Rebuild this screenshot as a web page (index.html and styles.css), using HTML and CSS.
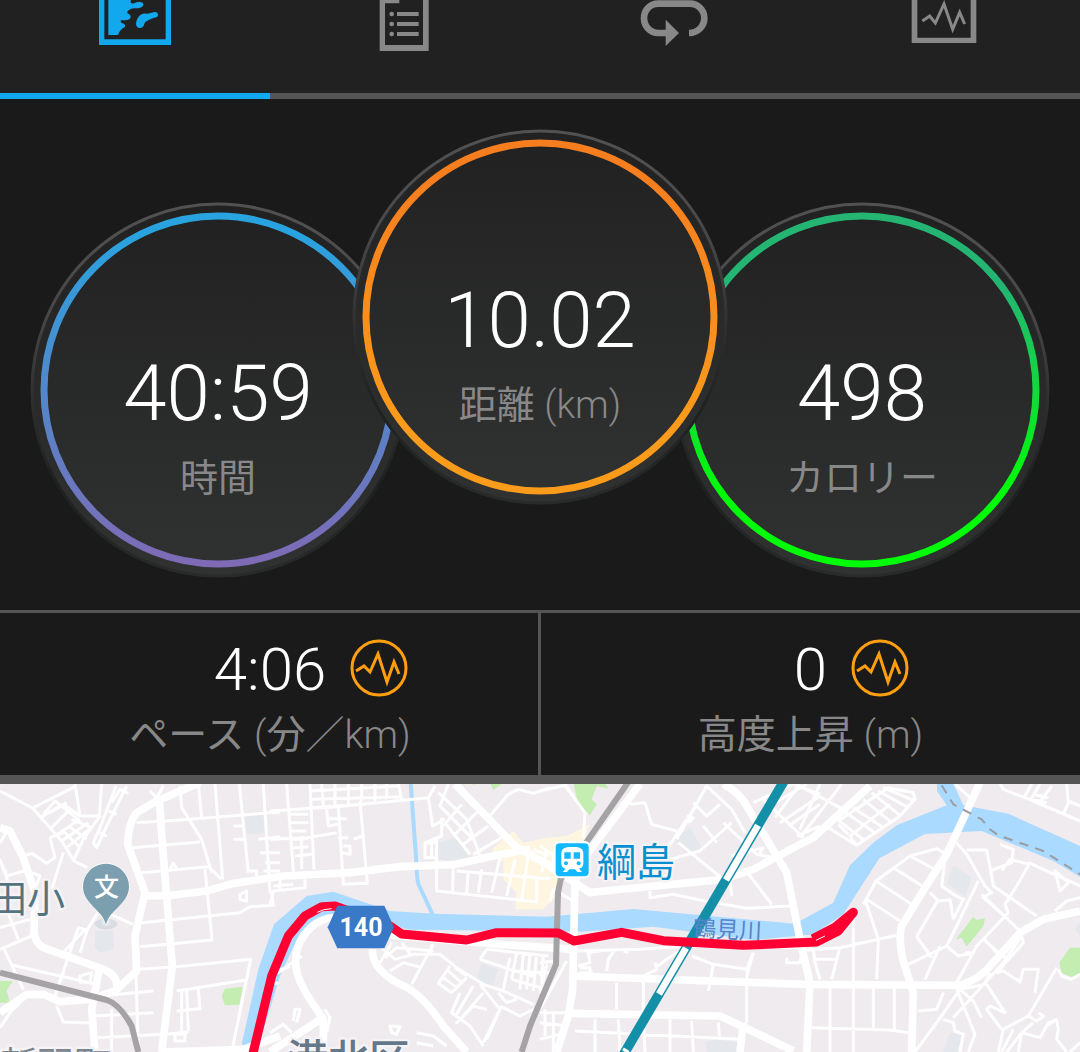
FILE: index.html
```html
<!DOCTYPE html>
<html lang="ja">
<head>
<meta charset="utf-8">
<meta name="viewport" content="width=device-width, initial-scale=1">
<title>アクティビティ</title>
<link rel="stylesheet" href="styles.css">
</head>
<body>
<nav class="tabs" aria-label="アクティビティ">
  <button class="tab tab-active" type="button" aria-label="マップ">
    <svg class="tab-icon" width="72" height="52" viewBox="0 0 216 156">
      <path d="M0 0H216V135H0ZM16 0V118H200V0Z" fill="currentColor" fill-rule="evenodd"/>
      <path d="M28 0H96Q91 13 105 10Q113 5 124 6Q136 8 132 17Q128 24 112 25Q97 23 87 32Q81 39 91 43Q99 50 91 58Q83 62 68 60Q61 65 70 70Q81 73 78 81Q62 88 57 105H28Z" fill="currentColor"/>
      <path d="M111 72Q112 54 125 44Q132 40 146 41L163 37Q176 34 177 45Q176 53 165 53Q150 58 138 67L134 77Q130 85 121 84Q112 82 111 72Z" fill="currentColor"/>
    </svg>
  </button>
  <button class="tab" type="button" aria-label="詳細">
    <svg class="tab-icon" width="52" height="52" viewBox="0 0 156 156">
      <path d="M2 0H149V153H2ZM18 10V135H132V0H61V10Z" fill="currentColor" fill-rule="evenodd"/>
      <g fill="currentColor"><circle cx="38" cy="42" r="7"/><circle cx="38" cy="72" r="7"/><circle cx="38" cy="102" r="7"/><path d="M54 36H119V48H54ZM54 66H119V78H54ZM54 96H119V108H54Z"/></g>
    </svg>
  </button>
  <button class="tab" type="button" aria-label="ラップ">
    <svg class="tab-icon" width="70" height="52" viewBox="0 0 210 156">
      <path d="M78 99H55C30 99 12 78 12 54S30 11 55 11H149C174 11 193 30 193 54S174 99 147 99" fill="none" stroke="currentColor" stroke-width="20"/>
      <path d="M77 59L117 99L77 138Z" fill="currentColor"/>
    </svg>
  </button>
  <button class="tab" type="button" aria-label="チャート">
    <svg class="tab-icon" width="68" height="52" viewBox="0 0 204 156">
      <path d="M2 0H196V129H2ZM19 0V113H179V0Z" fill="currentColor" fill-rule="evenodd"/>
      <path d="M34 63L56 48L73 69L99 12L125 88L146 37L161 72" fill="none" stroke="currentColor" stroke-width="9"/>
    </svg>
  </button>
</nav>

<main>
  <svg class="defs" width="0" height="0" aria-hidden="true">
    <defs>
      <linearGradient id="face" x2="0" y2="1"><stop stop-color="#212121"/><stop offset="1" stop-color="#303231"/></linearGradient>
      <linearGradient id="rim" gradientUnits="userSpaceOnUse" x1="0" y1="0" x2="0" y2="376"><stop stop-color="#525252"/><stop offset=".3" stop-color="#474747"/><stop offset=".55" stop-color="#2d2d2d"/><stop offset=".75" stop-color="#1f2020"/><stop offset="1" stop-color="#292b2a"/></linearGradient>
      <linearGradient id="blue" x2="0" y2="1"><stop offset=".05" stop-color="#29a3df"/><stop offset="1" stop-color="#7f6ab5"/></linearGradient>
      <linearGradient id="orange" x2="0" y2="1"><stop offset=".1" stop-color="#f67e1f"/><stop offset=".8" stop-color="#fa9b1b"/></linearGradient>
      <linearGradient id="green" x2="0" y2="1"><stop offset=".2" stop-color="#24b573"/><stop offset=".8" stop-color="#00fc06"/></linearGradient>
    </defs>
  </svg>
  <section class="dials">
    <div class="dial">
      <svg class="dial-face" viewBox="0 0 376 376"><circle cx="188" cy="188" r="187" fill="url(#face)"/><circle cx="188" cy="188" r="186" fill="none" stroke="url(#rim)" stroke-width="3"/><circle cx="188" cy="188" r="174" fill="none" stroke="url(#blue)" stroke-width="7"/></svg>
      <div class="dial-text"><div class="dial-value">40:59</div><div class="label">時間</div></div>
    </div>
    <div class="dial dial-main">
      <svg class="dial-face" viewBox="0 0 376 376"><circle cx="188" cy="188" r="187" fill="url(#face)"/><circle cx="188" cy="188" r="186" fill="none" stroke="url(#rim)" stroke-width="3"/><circle cx="188" cy="188" r="174" fill="none" stroke="url(#orange)" stroke-width="7"/></svg>
      <div class="dial-text"><div class="dial-value">10.02</div><div class="label">距離 <span class="unit">(km)</span></div></div>
    </div>
    <div class="dial">
      <svg class="dial-face" viewBox="0 0 376 376"><circle cx="188" cy="188" r="187" fill="url(#face)"/><circle cx="188" cy="188" r="186" fill="none" stroke="url(#rim)" stroke-width="3"/><circle cx="188" cy="188" r="174" fill="none" stroke="url(#green)" stroke-width="7"/></svg>
      <div class="dial-text"><div class="dial-value">498</div><div class="label">カロリー</div></div>
    </div>
  </section>

  <section class="stats">
    <div class="stat">
      <div class="stat-row"><span class="stat-value">4:06</span>
        <button class="chart-button" type="button" aria-label="ペースのチャート"><svg width="58" height="58" viewBox="0 0 58 58" fill="none" stroke="#ff9e0f"><circle cx="29" cy="29" r="27" stroke-width="3"/><path d="M6 32L14 27L20 33L28 15L37 43L44 23L49 35" stroke-width="3"/></svg></button>
      </div>
      <div class="label">ペース <span class="unit">(</span>分<span class="unit">／km)</span></div>
    </div>
    <div class="stat">
      <div class="stat-row"><span class="stat-value">0</span>
        <button class="chart-button" type="button" aria-label="高度のチャート"><svg width="58" height="58" viewBox="0 0 58 58" fill="none" stroke="#ff9e0f"><circle cx="29" cy="29" r="27" stroke-width="3"/><path d="M6 32L14 27L20 33L28 15L37 43L44 23L49 35" stroke-width="3"/></svg></button>
      </div>
      <div class="label">高度上昇 <span class="unit">(m)</span></div>
    </div>
  </section>

  <section class="map" aria-label="マップ">
    <svg class="map-canvas" viewBox="0 0 1080 268">
      <g transform="translate(0 -8) scale(.333333)">
        <!-- land use -->
        <g fill="#e4e8ed">
          <path d="M732 122L790 116L795 172L730 174ZM285 465L340 462L340 520L300 530L285 515Z"/>
          <path d="M1312 200L1370 185L1415 240L1345 265L1315 245ZM1430 615L1445 562L1495 580L1475 635Z"/>
          <path d="M2022 190L2070 155L2105 215L2060 232ZM2118 798L2150 790L2215 800L2215 828L2120 828ZM2840 320L2860 268L2915 305L2895 362ZM2830 828L2850 770L2890 775L2870 828ZM3225 460L3240 440V480Z"/>
        </g>
        <path d="M1475 220L1540 165L1570 200L1640 185L1700 180L1770 145L1750 200L1700 220L1680 350L1630 400L1545 400L1550 350L1510 310L1510 260Z" fill="#fff6e2"/>
        <g fill="#c3edb1">
          <path d="M0 615L38 615L20 645L30 680L0 680ZM665 660L675 638L728 632L718 686L675 688ZM1420 20H1435L1420 28ZM1470 20H1510L1480 42ZM1720 20H1815L1825 38L1790 30L1775 70L1790 85L1770 118L1735 85ZM2868 490L2920 422L2930 432L2955 426L2950 450L2900 512L2885 485ZM3178 560L3210 515L3240 515V595L3215 603L3185 590Z"/>
        </g>
        <!-- water -->
        <g fill="#aadaff">
          <path d="M725 805L775 580L822 445L920 360L1000 347L1170 405L1300 413L1640 422L1900 399L2400 445L2400 435L2500 380L2550 268L2620 200L2690 148L2840 88L2811 45V24H2860L2890 88L3025 113L3240 210V302L3160 255L2945 165L2775 174L2638 247L2530 415L2440 475L2260 492L1960 452L1740 467L1230 461L1150 440L1080 390L900 470L840 600L770 828Z"/>
        </g>
        <path d="M1232 20L1250 270Q1250 320 1260 335L1300 420" class="stream"/>
        <!-- side streets, west -->
        <g class="street">
          <path d="M0 45L98 96L225 32M98 96L185 195L222 255L262 275M225 24L240 120M120 125L190 85L240 120H300L275 155L250 190L222 250M150 110L200 80M305 24L298 120M130 115L165 75L235 130M155 155L210 100M165 180L240 130M185 195L265 140M200 215L280 150M205 150L260 190M190 165L240 215M215 130L275 155M348 30L300 155L280 200L290 215L320 150L380 30M335 80L360 40L385 52M325 105L350 115M300 170L320 180M150 185L165 245L140 262L95 232L70 240M150 185L190 170M190 230L155 340M0 200L18 170M0 250L18 300L90 280M15 280L25 330L20 400L55 490M0 455L90 430M0 520L95 480M10 515L70 640M38 568L290 625M180 540L255 460L235 455L165 660M240 530L262 460L300 400L398 445M95 290L120 300L110 325L90 310M240 600L275 590L270 620L240 618ZM170 690L190 738L290 742M0 755L30 710L75 665M300 660L460 645M285 720L460 710M290 785L490 775M335 700V828M408 590L415 828"/>
          <path d="M410 140L540 132L840 108M395 215L600 198M425 290L625 272L665 310M425 440L720 410L750 392L820 388L815 350M420 512L636 492L615 280M418 580L530 572L752 550L695 828M530 645L738 612M540 30L545 95L605 190L635 290M595 24L605 125M645 24L668 310M718 24L745 290M790 24L810 350M700 150H730M700 190H730M775 190L840 182M780 230H840M795 260H840M790 285H840M745 285H770V300M720 355L740 345V375L720 370ZM510 280L520 262L530 278M450 45L470 65L490 30M530 705L600 698L595 640M545 640V770M560 640L565 765M525 775H555V795H525ZM500 775L565 768"/>
        </g>
        <!-- side streets, harbour ward -->
        <g class="street" transform="translate(810)">
          <path d="M0 105L200 92L475 65L495 30M475 65L488 150L525 130M0 190L110 185L200 170M50 24L72 310M120 24L132 280M120 45L390 30M125 70L395 62M122 95L270 85M155 24L160 90M195 24V90M235 24V85M275 24V75M315 24V75M350 24V70M385 24L395 70M60 115H115M62 140H115M65 165H110M68 190L115 188M70 215L115 212M75 240L125 235M95 180V280M205 90L220 325L292 322L270 75M170 100L175 150L205 145M175 128H230M205 185H235M220 210H240V235L215 230M250 190L275 180M0 385L10 345L105 335V310M10 330L70 325M30 310V340"/>
          <path d="M535 24L510 90L610 190M505 50L590 130L630 240M525 140L600 235M520 150L575 85M550 180L620 110M580 205L655 150M610 235L695 185M515 125V180L465 200V250M500 190V345L800 378L800 300M485 205V250M550 260L548 345M595 285L590 350M635 280L625 350M690 245L665 350M735 250L710 360M775 240L755 370M560 285L840 308M655 125L715 55L745 40L790 52L840 35M465 200H500V245H465M790 220L835 240"/>
          <path d="M330 510L375 550L430 535L510 535L560 575L640 625L700 645L790 685M345 545L380 515L490 525M360 585L400 560L455 575M330 560L365 500M395 500L425 540M490 505L425 625M540 570L505 622L545 650L590 605M520 605L560 635M535 585L575 620M555 575L590 600M570 650L545 710L600 750L640 810M610 630L560 715M630 625L690 700L650 790M640 650L580 720L560 740L610 690L650 700M685 650L710 680L740 670M630 550L650 520L835 540M630 550L720 580L790 600M720 545L700 640M740 530L725 610M760 535L750 640M780 535L770 640M800 535L790 645M820 535L815 620M725 585L840 590M725 610L830 640M640 800L690 700M690 690L750 720L790 700M440 770L490 780L530 810M440 800L490 810M360 750L390 752L380 775L365 770ZM0 770L40 745L65 770M70 735L75 700L90 700L80 740M165 700L180 725L170 770M0 620L25 622M0 590L60 572M10 600L95 540"/>
        </g>
        <!-- side streets, around the station -->
        <g class="street" transform="translate(1620)">
          <path d="M0 45L75 28L135 110L130 185M75 24L100 60M270 85L315 80L335 145L410 165M410 190L500 30L575 100L615 170M360 250L440 130M460 80L500 120L540 85M440 120L460 125L445 140M390 250L480 225L575 140M415 200L550 310M490 150L530 200M550 140L650 235L700 245M575 240L670 215L655 240M615 280L695 385M575 360L570 310M330 345L330 365L400 355L480 372L620 397L750 390M640 80L760 24M670 70L790 185M680 95L800 24M705 125L780 24M720 140L840 60M745 150L840 85M760 24L840 55M770 180L840 150M0 210L60 250M30 375L40 340L100 375M0 245L50 270M20 225L5 290M40 240V285"/>
          <path d="M100 525L300 520L450 510L790 515M115 570L150 560L145 530L180 525M120 590L155 590V610M200 585L205 550L225 520M265 530L250 525M310 610V710M230 620V700M345 575L395 540L440 515M310 600L350 580L345 560M455 540L520 565L505 645M520 565L620 580L640 530M740 545V560H780L785 530M640 530L620 600V740M165 730V828M235 730L240 828M310 725L315 828M390 730V828M455 735L460 828M535 740L538 780M105 765L600 790M0 710H90M0 740L85 750M0 790L60 775M40 710V828M15 700V780M80 555L0 700M0 560L45 555M0 600L20 570L0 650M150 595V575H120"/>
        </g>
        <!-- side streets, east -->
        <g class="street" transform="translate(2400)">
          <path d="M0 30L130 100M60 24L0 160M125 24L0 185M85 155L170 208L300 120L345 70L340 50L265 35L115 135M170 208L150 180L270 85M105 125L195 195M130 105L225 170M160 95L250 155M190 70L275 140M215 50L300 118M235 45L325 95M250 35L345 75M145 175L115 145M190 385L228 315L330 240L410 218L435 232M330 240L405 280M285 278L375 335M228 315L335 385M200 370L300 435M195 370L235 490L230 610M160 410V828M20 522L120 515L290 478M40 522L45 560L60 610M45 550H115M118 520L95 610M90 635V828M220 635V755M283 635V760M35 755L270 762L325 770"/>
          <path d="M470 200L500 235L555 330L575 350L555 360M500 222H560L575 300L580 330L710 420M600 205L640 220L635 260L570 285M605 285L630 250L690 265M435 250L425 330L460 355L490 370L460 430M535 315L465 460L440 510L325 565M415 370L350 482L395 545M390 350L415 375L450 372L460 430M420 510L375 610M440 510L475 540L520 530L495 530M545 355L665 470L655 495L610 560L460 725M545 360L625 430M555 490L590 530M690 260L650 330L615 385L625 410L530 510L470 620M685 260L840 330M765 285L805 320L780 345ZM765 405L800 375L840 365M550 490L620 550L565 610M665 480L670 500L590 590L610 585L660 618L670 580L715 580L705 650M480 640L560 625L615 710L570 690L560 700L605 760M480 640L520 675L545 725M470 640L525 775L505 828M570 590L555 620M355 705L410 700L430 650M480 640L410 740L345 828M430 730L460 740L465 765L490 775L480 828M770 575L685 720L610 760L595 828M775 580L785 600L815 610L840 595M685 720L710 735L730 720L715 710M665 770L720 785L745 740L770 732L775 760L770 790L800 828M620 828L665 770L700 740M665 770L655 828M840 800L810 828M640 760L605 828M770 730L740 750M600 24L610 40L700 75L840 135M675 60L695 24M690 75L720 24M715 85L755 30M700 55L745 65M695 70L740 80M800 24L805 80L790 115M805 75L840 90M465 24L510 65"/>
        </g>
        <!-- main roads -->
        <g class="road">
          <path d="M600 20L470 75L410 110Q385 140 383 205L435 350L405 480L410 585L345 645L270 670L180 677L130 655H80L0 710"/>
          <path d="M478 75L490 240L517 570L485 828"/>
          <path d="M0 155L30 165L70 245L105 350L102 470Q105 500 130 515L310 580Q355 600 350 635"/>
          <path d="M298 580L275 700L285 828"/>
          <path d="M435 360L510 358L620 345L700 322L850 300L1050 290L1200 272L1360 266L1480 240L1590 220"/>
          <path d="M1365 24L1545 210L1640 265L1770 350L1810 345L2170 310L2260 280L2400 205L2440 185L2610 30"/>
          <path d="M1920 24L1750 250L1725 320L1718 640L1705 720L1670 828"/>
          <path d="M2170 24Q2220 50 2240 90L2360 290L2400 490L2430 620L2420 828"/>
          <path d="M1720 600L2420 625L2880 628Q2940 610 2975 565L3060 470L3130 430L3240 405"/>
          <path d="M2940 20L2840 235L2775 335L2705 450Q2695 480 2708 550L2740 650L2735 828"/>
          <path d="M1705 712L2160 720L2235 755L2380 825M2230 740L2220 828"/>
          <path d="M1000 425Q940 430 905 490Q880 530 890 585Q900 630 950 700L970 730V828M970 725L810 828"/>
          <path d="M1117 520Q1115 580 1200 625Q1260 645 1330 750L1400 828"/>
          <path d="M1150 475L1500 505L1720 520"/>
          <path d="M490 828L730 820L840 780"/>
        </g>
        <!-- railways -->
        <path class="rail" d="M0 590L320 672Q360 685 395 750L415 828M1885 18L1682 310L1674 350L1668 565L1590 750L1565 828"/>
        <path d="M2825 28L2860 85L2945 130L2970 160L2995 178L3130 225L3240 295" fill="none" stroke="#9a9ea2" stroke-width="6" stroke-dasharray="28 22"/>
        <path d="M2355 10L1868 840" fill="none" stroke="#148fa8" stroke-width="29"/>
        <path d="M2274 148L2178 312M2058 516L1977 654M1880 820L1875 828" fill="none" stroke="#fff" stroke-width="20"/>
        <!-- the river name lies between the line and the route -->
        <text class="river-name" transform="translate(2078 480) rotate(3)">鶴見川</text>
        <!-- recorded route -->
        <path class="route" d="M757 840L815 600L865 480L915 420L965 392L1005 390L1170 450L1205 474L1400 492L1490 470L1675 471L1722 495L1865 469L1990 494L2230 508L2450 498L2515 465L2560 409L2505 454L2438 488"/>
        <path d="M952 409L972 401L995 398M2448 493L2475 480" fill="none" stroke="#fff" stroke-width="3"/>
        <!-- route number -->
        <path d="M983 454L1012 389H1153L1182 454L1153 517H1012Z" fill="#3a78c8"/>
        <!-- station -->
        <rect x="1660" y="195" width="112" height="112" rx="18" fill="#fff"/>
        <rect x="1667" y="202" width="99" height="99" rx="12" fill="#12b9ff"/>
        <path d="M1704 213H1730Q1750 215 1750 232V262Q1750 277 1737 278L1746 288H1732L1725 280H1708L1701 288H1688L1697 278Q1684 277 1684 262V232Q1684 215 1704 213Z" fill="#fff"/>
        <path d="M1693 229H1712V248H1693ZM1721 229H1740V248H1721Z" fill="#12b9ff"/><circle cx="1698" cy="262" r="6" fill="#12b9ff"/><circle cx="1736" cy="262" r="6" fill="#12b9ff"/>
        <!-- school -->
        <ellipse cx="318" cy="444" rx="34" ry="16" fill="#bac5cc" opacity=".4"/>
        <ellipse cx="318" cy="440" rx="13" ry="10" fill="#e4e8ed"/>
        <path d="M318 446C308 400 250 385 249 332A69 69 0 0 1 387 332C386 385 328 400 318 446Z" fill="#7c9fb0" stroke="#f8f8fa" stroke-width="5" paint-order="stroke"/>
      </g>
      <text class="place school-mark" x="94" y="112">文</text>
      <text class="place school-name" x="-11" y="128">田小</text>
      <text class="place town-name" x="0" y="295">新羽町</text>
      <text class="place ward-name" x="287" y="290">港北区</text>
      <text class="place station-name" x="597" y="92">綱島</text>
      <text class="route-number" x="361" y="152">140</text>
    </svg>
  </section>
</main>
</body>
</html>
```

FILE: styles.css
```css
* {
  box-sizing: border-box;
}

body {
  margin: 0;
  background: #1a1a1a;
  color: #fff;
  font-family: Roboto, "Noto Sans CJK JP", sans-serif;
}

button {
  padding: 0;
  border: 0;
  background: none;
  color: inherit;
  cursor: pointer;
}

.tabs {
  display: grid;
  grid-template-columns: repeat(4, 1fr);
  background: #212121;
}

.tab {
  display: flex;
  justify-content: center;
  padding-bottom: 41px;
  border-bottom: 6px solid #555;
  color: #888;
}

.tab-active {
  border-color: #12a8ee;
  color: #12a8ee;
}

.tab-icon {
  display: block;
}

.defs {
  position: absolute;
}

.dials {
  display: flex;
  justify-content: center;
  align-items: flex-end;
  padding: 30px 0 32px;
}

.dial {
  display: grid;
  flex: 0 0 376px;
  margin-top: 73px;
}

.dial-main {
  z-index: 1;
  align-self: flex-start;
  margin: 0 -54px;
}

.dial-face,
.dial-text {
  grid-area: 1 / 1;
}

.dial-face {
  display: block;
  width: 100%;
}

.dial-text {
  padding-top: 146px;
  text-align: center;
}

.dial-value {
  font-size: 78px;
  font-weight: 300;
  line-height: 92px;
}

.label {
  color: #888;
  font-size: 38px;
  line-height: 48px;
}

.unit {
  font-weight: 300;
}

.dial .label {
  margin-top: 14px;
}

.stats {
  display: grid;
  grid-template-columns: 1fr 1fr;
  border-top: 3px solid #555;
  border-bottom: 9px solid #555;
}

.stat {
  padding: 20px 0 16px;
  text-align: center;
}

.stat + .stat {
  border-left: 3px solid #555;
  margin-left: -2px;
}

.stat-row {
  display: grid;
  grid-template-columns: 1fr auto 1fr;
  column-gap: 24px;
  align-items: center;
}

.stat-value {
  grid-column: 2;
  padding-top: 4px;
  font-size: 60px;
  font-weight: 300;
  line-height: 66px;
}

.chart-button {
  justify-self: start;
}

.chart-button svg {
  display: block;
}

.stat .label {
  margin-top: 8px;
  font-size: 39px;
}

.map {
  background: #efebee;
}

.map-canvas {
  display: block;
  width: 100%;
  overflow: hidden;
}

.street {
  fill: none;
  stroke: #fff;
  stroke-width: 9;
  stroke-linejoin: round;
}

.road {
  fill: none;
  stroke: #fff;
  stroke-width: 23;
  stroke-linejoin: round;
}

.stream {
  fill: none;
  stroke: #aadaff;
  stroke-width: 12;
}

.rail {
  fill: none;
  stroke: #a5a3a5;
  stroke-width: 18;
}

.route {
  fill: none;
  stroke: #ff0033;
  stroke-width: 27;
  stroke-linejoin: round;
}

.river-name {
  fill: #5585cb;
  font-family: "Noto Sans CJK JP", sans-serif;
  font-size: 69px;
}

.place {
  font-family: "Noto Sans CJK JP", sans-serif;
  stroke: #f5f3f5;
  stroke-width: 5px;
  stroke-linejoin: round;
  paint-order: stroke;
}

.school-mark {
  fill: #fff;
  stroke: none;
  font-size: 25px;
  font-weight: 500;
}

.school-name {
  fill: #54737f;
  font-size: 38px;
}

.town-name {
  fill: #7b858f;
  font-size: 37px;
}

.ward-name {
  fill: #65778a;
  font-size: 41px;
  font-weight: 500;
}

.station-name {
  fill: #078fcf;
  font-size: 39px;
}

.route-number {
  fill: #fff;
  font-size: 25px;
  font-weight: 700;
  text-anchor: middle;
}
```
